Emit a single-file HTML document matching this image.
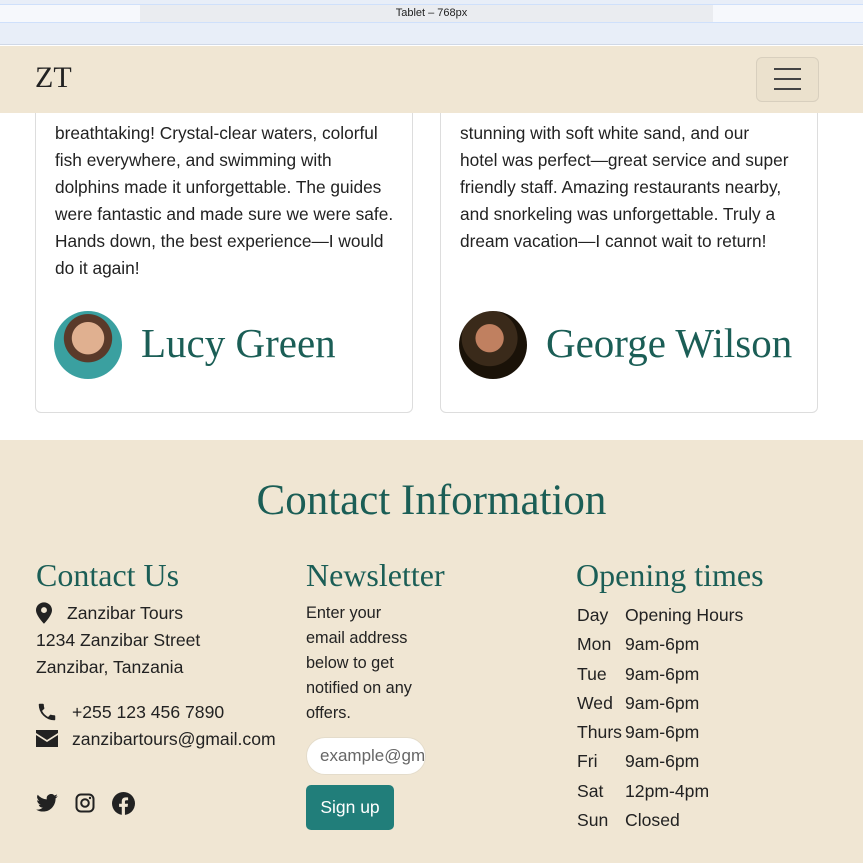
<!DOCTYPE html>
<html><head><meta charset="utf-8"><style>
*{margin:0;padding:0;box-sizing:border-box}
body{width:863px;height:863px;overflow:hidden;background:#fff;font-family:"Liberation Sans",sans-serif;color:#222;position:relative}
.abs{position:absolute}
.serif{font-family:"Liberation Serif",serif}
.card{position:absolute;top:80px;width:378px;height:333px;border:1px solid #ddd;border-radius:6px;background:#fff}
.card p{position:absolute;left:19px;top:12px;width:360px;font-size:17.3px;line-height:27px;color:#222;white-space:nowrap}
.name{position:absolute;top:238px;font-size:41px;color:#1b5e56}
.av{position:absolute;left:18px;top:230px;width:68px;height:68px;border-radius:50%}
.foot{position:absolute;top:440px;left:0;width:863px;height:423px;background:#f0e6d3}
h3{position:absolute;font-weight:normal;font-size:32px;color:#1b5e56;font-family:"Liberation Serif",serif}
.t{position:absolute;font-size:17.6px;line-height:27px}
</style></head><body>
<div class="card" style="left:35px"><p>&nbsp;<br>breathtaking! Crystal-clear waters, colorful<br>fish everywhere, and swimming with<br>dolphins made it unforgettable. The guides<br>were fantastic and made sure we were safe.<br>Hands down, the best experience—I would<br>do it again!</p>
<div class="av" style="background:radial-gradient(circle at 50% 40%,#e0b090 0 30%,#5a3a2a 31% 45%,#3aa0a0 46%)"></div>
<div class="name serif" style="left:105px">Lucy Green</div></div>
<div class="card" style="left:440px"><p>&nbsp;<br>stunning with soft white sand, and our<br>hotel was perfect—great service and super<br>friendly staff. Amazing restaurants nearby,<br>and snorkeling was unforgettable. Truly a<br>dream vacation—I cannot wait to return!</p>
<div class="av" style="background:radial-gradient(circle at 45% 40%,#c08060 0 25%,#3a2a1a 26% 50%,#1a1208 51%)"></div>
<div class="name serif" style="left:105px">George Wilson</div></div>

<div class="abs" style="top:0;left:0;width:863px;height:45px;background:#e8eef8;border-bottom:1px solid #d0d8e6"></div>
<div class="abs" style="top:4px;left:0;width:863px;height:19px;background:#f6f8fc;border-top:1px solid #cfe0fb;border-bottom:1px solid #cfe0fb"></div>
<div class="abs" style="top:5px;left:140px;width:573px;height:17px;background:#eaecf0"></div>
<div class="abs" style="top:5px;left:0;width:863px;height:17px;font-size:11px;text-align:center;line-height:17px;color:#222">Tablet – 768px</div>
<div class="abs" style="top:46px;left:0;width:863px;height:67px;background:#f0e6d3"></div>
<div class="abs serif" style="top:61px;left:35px;font-size:30px;color:#222">ZT</div>
<div class="abs" style="top:57px;left:756px;width:63px;height:45px;border:1px solid #d8cfbe;border-radius:6px;background:#ebe1cd"></div>
<div class="abs" style="top:68px;left:774px;width:27px;height:2px;background:#444;box-shadow:0 10px 0 #444,0 20px 0 #444"></div>

<div class="foot">
<div class="abs serif" style="top:36px;width:863px;text-align:center;font-size:43px;color:#1b5e56">Contact Information</div>
<h3 style="left:36px;top:117px">Contact Us</h3>
<h3 style="left:306px;top:117px">Newsletter</h3>
<h3 style="left:576px;top:117px">Opening times</h3>
<svg class="abs" style="left:36px;top:162px" width="16" height="22" viewBox="0 0 12 16"><path d="M6 0C2.7 0 0 2.6 0 5.8 0 10 6 16 6 16s6-6 6-10.2C12 2.6 9.3 0 6 0zm0 8a2.2 2.2 0 1 1 0-4.4A2.2 2.2 0 0 1 6 8z" fill="#222"/></svg>
<div class="t" style="left:67px;top:160px">Zanzibar Tours</div>
<div class="t" style="left:36px;top:187px">1234 Zanzibar Street<br>Zanzibar, Tanzania</div>
<svg class="abs" style="left:36px;top:261px" width="22" height="22" viewBox="0 0 24 24"><path d="M6.6 10.8a15 15 0 0 0 6.6 6.6l2.2-2.2c.3-.3.7-.4 1-.2 1.1.4 2.3.6 3.6.6.6 0 1 .4 1 1V20c0 .6-.4 1-1 1A17 17 0 0 1 3 4c0-.6.4-1 1-1h3.5c.6 0 1 .4 1 1 0 1.3.2 2.5.6 3.6.1.3 0 .7-.2 1z" fill="#222"/></svg>
<div class="t" style="left:72px;top:259px">+255 123 456 7890</div>
<svg class="abs" style="left:36px;top:290px" width="22" height="17" viewBox="0 0 22 17"><path d="M0 0h22v3L11 10 0 3z M0 5l11 7 11-7v12H0z" fill="#222"/></svg>
<div class="t" style="left:72px;top:286px">zanzibartours@gmail.com</div>
<svg class="abs" style="left:36px;top:354px" width="22" height="18" viewBox="0 0 24 20"><path d="M24 2.4a10 10 0 0 1-2.8.8A5 5 0 0 0 23.3.4a10 10 0 0 1-3.1 1.2A4.9 4.9 0 0 0 11.8 6 14 14 0 0 1 1.7.9a4.9 4.9 0 0 0 1.5 6.6A5 5 0 0 1 1 6.9a4.9 4.9 0 0 0 3.9 4.8 5 5 0 0 1-2.2.1 4.9 4.9 0 0 0 4.6 3.4A9.9 9.9 0 0 1 0 17.3 14 14 0 0 0 7.5 19.5c9 0 14-7.5 14-14v-.6A10 10 0 0 0 24 2.4z" fill="#222"/></svg>
<svg class="abs" style="left:75px;top:353px" width="20" height="20" viewBox="0 0 20 20"><rect x="1.5" y="1.5" width="17" height="17" rx="4.5" fill="none" stroke="#222" stroke-width="2"/><circle cx="10" cy="10" r="3.8" fill="none" stroke="#222" stroke-width="2"/><circle cx="15" cy="5" r="1.2" fill="#222"/></svg>
<svg class="abs" style="left:112px;top:352px" width="23" height="23" viewBox="0 0 24 24"><circle cx="12" cy="12" r="12" fill="#222"/><path d="M13.5 24v-8.5h2.8l.4-3.3h-3.2v-2c0-1 .3-1.6 1.6-1.6h1.7V5.7c-.3 0-1.3-.1-2.5-.1-2.5 0-4.1 1.5-4.1 4.2v2.4H7.4v3.3h2.8V24z" fill="#f0e6d3"/></svg>
<div class="t" style="left:306px;top:161px;font-size:16.3px;line-height:25px">Enter your<br>email address<br>below to get<br>notified on any<br>offers.</div>
<div class="abs" style="left:306px;top:297px;width:120px;height:38px;background:#fff;border-radius:19px;border:1px solid #e4dccb;font-size:17px;color:#666;padding:8px 0 0 13px;overflow:hidden;white-space:nowrap">example@gm</div>
<div class="abs" style="left:306px;top:345px;width:88px;height:45px;background:#217e7a;border-radius:5px;color:#fff;font-size:17.5px;text-align:center;line-height:45px">Sign up</div>
<div class="t" style="left:577px;top:161px;line-height:29.3px">Day<br>Mon<br>Tue<br>Wed<br>Thurs<br>Fri<br>Sat<br>Sun</div>
<div class="t" style="left:625px;top:161px;line-height:29.3px">Opening Hours<br>9am-6pm<br>9am-6pm<br>9am-6pm<br>9am-6pm<br>9am-6pm<br>12pm-4pm<br>Closed</div>
</div>
</body></html>
